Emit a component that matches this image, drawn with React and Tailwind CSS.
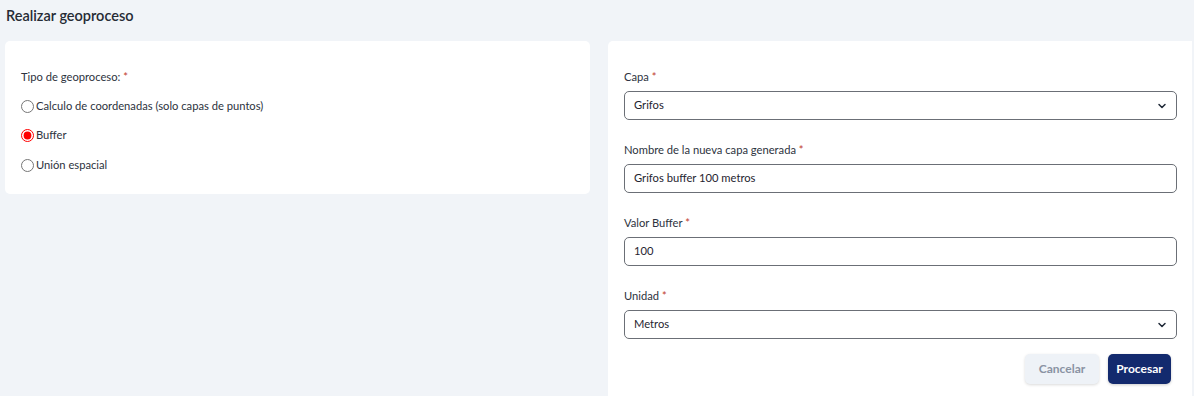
import React from "react";

const font = { fontFamily: "Lato, 'Noto Sans', sans-serif" };

function Chevron() {
  return (
    <svg width="10" height="10" viewBox="0 0 10 10" className="text-[#1f2937]">
      <path d="M2 3.5 L5 6.5 L8 3.5" fill="none" stroke="currentColor" strokeWidth="1.5" strokeLinecap="round" strokeLinejoin="round" />
    </svg>
  );
}

function Label({ children }) {
  return (
    <div className="h-[14px] leading-[16px] text-[11.2px] text-[#2d3340]">
      {children} <span className="text-[#c0392b]">*</span>
    </div>
  );
}

function Field({ label, value, select }) {
  return (
    <div className="flex flex-col">
      <Label>{label}</Label>
      <div className="mt-[8px] h-[29px] flex items-center justify-between rounded-[5px] border border-[#6b6f76] px-[9px] text-[11.2px] text-[#1f2530]">
        <span>{value}</span>
        {select && <Chevron />}
      </div>
    </div>
  );
}

function Radio({ label, checked }) {
  return (
    <label className="flex items-center h-[16px] text-[11.2px] text-[#2d3340]">
      <input
        type="radio"
        name="geo"
        defaultChecked={checked}
        className="m-0 mr-[2px] w-[13px] h-[13px] accent-[#ff0000]"
      />
      <span>{label}</span>
    </label>
  );
}

export default function App() {
  return (
    <div style={font} className="min-h-[396px] bg-[#f1f4f8] pl-[5px] pr-[2px] overflow-hidden">
      <div className="h-[41px] flex items-start pt-[6px]">
        <h1 className="text-[14.5px] font-semibold text-[#262b35] leading-[20px] ml-[1px]">Realizar geoproceso</h1>
      </div>
      <div className="flex gap-[18px] items-start">
        <div className="flex-1 bg-white rounded-[5px] h-[153px] px-[16px] pt-[28px]">
          <Label>Tipo de geoproceso:</Label>
          <div className="mt-[15px] flex flex-col gap-[13.5px]">
            <Radio label="Calculo de coordenadas (solo capas de puntos)" />
            <Radio label="Buffer" checked />
            <Radio label="Unión espacial" />
          </div>
        </div>
        <div className="flex-1 bg-white rounded-tl-[5px] h-[360px] pl-[16px] pr-[15px] pt-[28px]">
          <div className="flex flex-col gap-[22px]">
            <Field label="Capa" value="Grifos" select />
            <Field label="Nombre de la nueva capa generada" value="Grifos buffer 100 metros" />
            <Field label="Valor Buffer" value="100" />
            <Field label="Unidad" value="Metros" select />
          </div>
          <div className="mt-[15px] flex justify-end gap-[9px] pr-[6px]">
            <button className="h-[30px] w-[74px] rounded-[5px] bg-[#eef2f7] text-[12px] font-bold text-[#8a93a3] shadow-[0_1px_3px_rgba(0,0,0,0.15)]">
              Cancelar
            </button>
            <button className="h-[30px] w-[63px] rounded-[5px] bg-[#132a6e] text-[12px] font-bold text-white shadow-[0_1px_3px_rgba(0,0,0,0.2)]">
              Procesar
            </button>
          </div>
        </div>
      </div>
    </div>
  );
}
